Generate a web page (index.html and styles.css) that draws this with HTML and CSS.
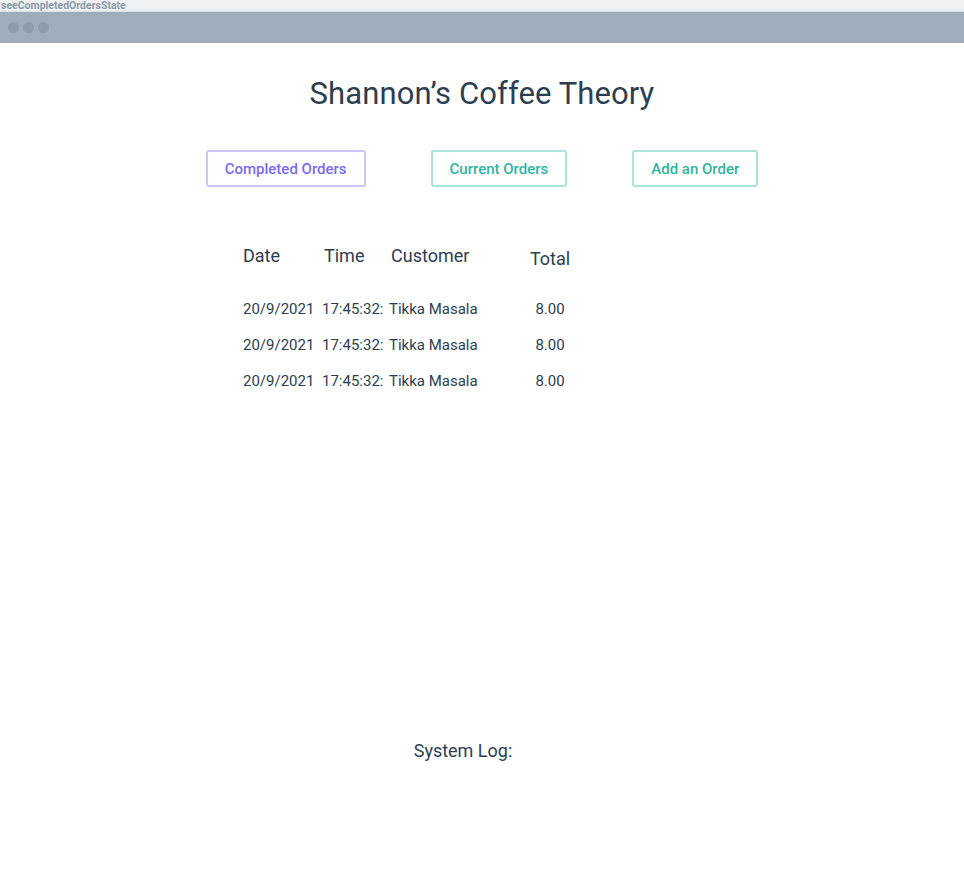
FILE: index.html
```html
<!DOCTYPE html>
<html>
<head>
<meta charset="utf-8">
<link rel="stylesheet" href="styles.css">
</head>
<body>
<div class="state-label">seeCompletedOrdersState</div>
<div class="window-bar">
  <span class="dot"></span><span class="dot"></span><span class="dot"></span>
</div>
<main class="app">
  <h1 class="title">Shannon’s Coffee Theory</h1>
  <nav class="nav">
    <button class="btn btn-active">Completed Orders</button>
    <button class="btn">Current Orders</button>
    <button class="btn">Add an Order</button>
  </nav>
  <section class="orders">
    <div class="orders-head">
      <span class="h-date">Date</span>
      <span class="h-time">Time</span>
      <span class="h-customer">Customer</span>
      <span class="h-total">Total</span>
    </div>
    <div class="orders-row">
      <span>20/9/2021</span><span>17:45:32:</span><span>Tikka Masala</span><span class="c-total">8.00</span>
    </div>
    <div class="orders-row">
      <span>20/9/2021</span><span>17:45:32:</span><span>Tikka Masala</span><span class="c-total">8.00</span>
    </div>
    <div class="orders-row">
      <span>20/9/2021</span><span>17:45:32:</span><span>Tikka Masala</span><span class="c-total">8.00</span>
    </div>
  </section>
  <div class="log">System Log:</div>
</main>
</body>
</html>
```

FILE: styles.css
```css
html, body {
  margin: 0;
  padding: 0;
  background: #ffffff;
  font-family: Roboto, "Noto Sans", sans-serif;
  color: #2c3e50;
}

.state-label {
  height: 11px;
  background: #eef1f4;
  color: #8e9aa6;
  font-size: 10.5px;
  font-weight: 700;
  line-height: 11px;
  padding-left: 1px;
  overflow: hidden;
  white-space: nowrap;
}

.window-bar {
  height: 32px;
  background: #9eadb9;
  display: flex;
  align-items: center;
  gap: 4px;
  padding-left: 8px;
  border-top: 1px solid #d8dee4;
  box-sizing: border-box;
}

.dot {
  width: 11px;
  height: 11px;
  border-radius: 50%;
  background: #8e9da9;
}

.app {
  display: flex;
  flex-direction: column;
  align-items: center;
}

.title {
  margin: 31px 0 0 0;
  font-size: 31px;
  line-height: 40px;
  font-weight: 400;
  color: #2d3e50;
  letter-spacing: 0.1px;
}

.nav {
  display: flex;
  gap: 65px;
  margin-top: 36px;
}

.btn {
  height: 37px;
  padding: 0 17px;
  background: #fff;
  border: 2px solid #a9e3d9;
  border-radius: 3px;
  color: #2fb59f;
  font-family: Roboto, "Noto Sans", sans-serif;
  font-size: 15px;
  font-weight: 500;
}

.btn-active {
  border-color: #cdc4fb;
  color: #7b6af0;
}

.orders {
  width: 478px;
  margin-top: 57px;
  font-size: 15px;
}

.orders-head,
.orders-row {
  display: grid;
  grid-template-columns: 79px 67px 140px 42px;
}

.orders-head {
  font-size: 18px;
  line-height: 24px;
  height: 40px;
}

.h-time,
.h-customer {
  padding-left: 2px;
}

.h-total {
  margin-top: 3px;
  text-align: center;
}

.orders-row {
  height: 36px;
  line-height: 24px;
  align-items: start;
}

.orders-head + .orders-row {
  margin-top: 13px;
}

.c-total {
  text-align: center;
}

.log {
  margin-top: 334px;
  margin-right: 38px;
  font-size: 18px;
  line-height: 24px;
}
```
